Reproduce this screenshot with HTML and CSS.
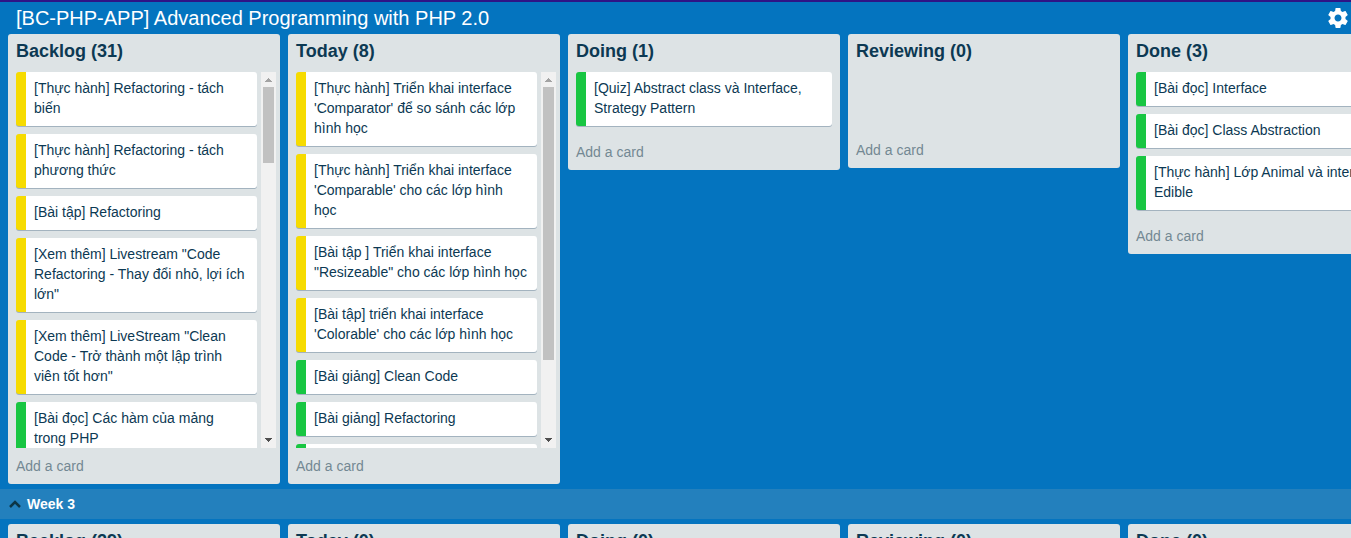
FILE: index.html
```html
<!DOCTYPE html>
<html lang="vi">
<head>
<meta charset="utf-8">
<title>[BC-PHP-APP] Advanced Programming with PHP 2.0</title>
<link rel="stylesheet" href="styles.css">
</head>
<body>
<header class="topbar">
  <h1 class="board-title">[BC-PHP-APP] Advanced Programming with PHP 2.0</h1>
  <svg class="gear" viewBox="2 2 20 20"><path fill="#fff" d="M19.43 12.98c.04-.32.07-.64.07-.98s-.03-.66-.07-.98l2.11-1.65c.19-.15.24-.42.12-.64l-2-3.46c-.12-.22-.39-.3-.61-.22l-2.49 1c-.52-.4-1.08-.73-1.69-.98l-.38-2.65C14.460 2.180 14.250 2 14 2h-4c-.25 0-.46.18-.49.42l-.38 2.65c-.61.25-1.170.59-1.690.98l-2.490-1c-.23-.09-.49 0-.61.22l-2 3.460c-.13.22-.07.49.12.64l2.110 1.650c-.04.32-.07.65-.07.98s.03.66.07.98l-2.110 1.650c-.19.15-.24.42-.12.64l2 3.460c.12.22.39.3.61.22l2.490-1c.52.4 1.080.73 1.690.98l.38 2.650c.03.24.24.42.49.42h4c.25 0 .46-.18.49-.42l.38-2.650c.61-.25 1.170-.59 1.690-.98l2.490 1c.23.09.49 0 .61-.22l2-3.460c.12-.22.07-.49-.12-.64l-2.110-1.650zM12 15.500c-1.930 0-3.500-1.570-3.500-3.500s1.570-3.500 3.500-3.500 3.500 1.570 3.500 3.500-1.570 3.500-3.500 3.500z"/></svg>
</header>
<main class="lists">
  <section class="column">
    <h2>Backlog (31)</h2>
    <div class="scroll-area">
      <div class="cards">
        <div class="card yellow">[Thực hành] Refactoring - tách<br>biến</div>
        <div class="card yellow">[Thực hành] Refactoring - tách<br>phương thức</div>
        <div class="card yellow">[Bài tập] Refactoring</div>
        <div class="card yellow">[Xem thêm] Livestream "Code<br>Refactoring - Thay đổi nhỏ, lợi ích<br>lớn"</div>
        <div class="card yellow">[Xem thêm] LiveStream "Clean<br>Code - Trở thành một lập trình<br>viên tốt hơn"</div>
        <div class="card green">[Bài đọc] Các hàm của mảng<br>trong PHP</div>
      </div>
      <div class="scrollbar">
        <svg class="arrow" viewBox="0 0 15 15"><path fill="#a3a3a3" d="M4 10h7v-1h-1v-1h-1v-1h-1v-1h-1v1h-1v1h-1v1h-1z"/></svg>
        <div class="thumb"></div>
        <svg class="arrow" viewBox="0 0 15 15"><path fill="#505050" d="M4 5h7v1h-1v1h-1v1h-1v1h-1v-1h-1v-1h-1v-1h-1z"/></svg>
      </div>
    </div>
    <div class="add">Add a card</div>
  </section>
  <section class="column">
    <h2>Today (8)</h2>
    <div class="scroll-area">
      <div class="cards">
        <div class="card yellow">[Thực hành] Triển khai interface<br>'Comparator' để so sánh các lớp<br>hình học</div>
        <div class="card yellow">[Thực hành] Triển khai interface<br>'Comparable' cho các lớp hình<br>học</div>
        <div class="card yellow">[Bài tập ] Triển khai interface<br>"Resizeable" cho các lớp hình học</div>
        <div class="card yellow">[Bài tập] triển khai interface<br>'Colorable' cho các lớp hình học</div>
        <div class="card green">[Bài giảng] Clean Code</div>
        <div class="card green">[Bài giảng] Refactoring</div>
        <div class="card green"></div>
      </div>
      <div class="scrollbar">
        <svg class="arrow" viewBox="0 0 15 15"><path fill="#a3a3a3" d="M4 10h7v-1h-1v-1h-1v-1h-1v-1h-1v1h-1v1h-1v1h-1z"/></svg>
        <div class="thumb tall"></div>
        <svg class="arrow" viewBox="0 0 15 15"><path fill="#505050" d="M4 5h7v1h-1v1h-1v1h-1v1h-1v-1h-1v-1h-1v-1h-1z"/></svg>
      </div>
    </div>
    <div class="add">Add a card</div>
  </section>
  <section class="column">
    <h2>Doing (1)</h2>
    <div class="cards open">
      <div class="card green">[Quiz] Abstract class và Interface,<br>Strategy Pattern</div>
    </div>
    <div class="add">Add a card</div>
  </section>
  <section class="column">
    <h2>Reviewing (0)</h2>
    <div class="cards open"></div>
    <div class="add">Add a card</div>
  </section>
  <section class="column">
    <h2>Done (3)</h2>
    <div class="cards open">
      <div class="card green">[Bài đọc] Interface</div>
      <div class="card green">[Bài đọc] Class Abstraction</div>
      <div class="card green">[Thực hành] Lớp Animal và interface<br>Edible</div>
    </div>
    <div class="add">Add a card</div>
  </section>
</main>
<div class="swimlane">
  <svg class="chevron" viewBox="0 0 12 8"><path d="M1 7l5-5 5 5" fill="none" stroke="#0c3547" stroke-width="2.5"/></svg>
  <span>Week 3</span>
</div>
<div class="lists next">
  <section class="column"><h2>Backlog (29)</h2></section>
  <section class="column"><h2>Today (0)</h2></section>
  <section class="column"><h2>Doing (0)</h2></section>
  <section class="column"><h2>Reviewing (0)</h2></section>
  <section class="column"><h2>Done (0)</h2></section>
</div>
</body>
</html>
```

FILE: styles.css
```css
* { box-sizing: border-box; }
body {
  margin: 0;
  height: 538px;
  overflow: hidden;
  background: #0474bf;
  color: #0c3953;
  font: 14px/20px "Liberation Sans", Arial, sans-serif;
}
.topbar {
  height: 34px;
  border-top: 2px solid #2e1486;
  padding: 0 3px 0 16px;
  display: flex;
  align-items: center;
  justify-content: space-between;
}
.board-title { margin: 0; font-size: 20px; line-height: 32px; font-weight: 400; color: #fff; }
.gear { width: 20px; height: 20px; }
.lists {
  display: flex;
  align-items: flex-start;
  gap: 8px;
  height: 455px;
  padding-left: 8px;
}
.column {
  flex: 0 0 272px;
  background: #dde3e5;
  border-radius: 3px;
  padding: 0 8px;
}
.column h2 { margin: 0; height: 38px; font-size: 18px; line-height: 34px; font-weight: 700; }
.scroll-area { height: 376px; display: flex; gap: 4px; margin-right: -4px; overflow: hidden; }
.cards { flex: 1; min-width: 0; display: flex; flex-direction: column; gap: 8px; }
.cards.open { min-height: 60px; padding-bottom: 8px; }
.card {
  flex: none;
  min-height: 34px;
  padding: 6px 0 8px 8px;
  border-left: 10px solid;
  border-radius: 3px;
  background: #fff;
  box-shadow: 0 1px 0 #a3b3bf;
  white-space: nowrap;
}
.card.yellow { border-left-color: #f6db00; }
.card.green { border-left-color: #18c642; }
.scrollbar { width: 15px; background: #f1f1f1; display: flex; flex-direction: column; align-items: center; }
.arrow { width: 15px; height: 15px; flex: none; shape-rendering: crispEdges; }
.thumb { width: 11px; height: 76px; background: #c1c1c1; margin-bottom: auto; }
.thumb.tall { height: 273px; }
.add { height: 36px; line-height: 36px; color: #738893; }
.swimlane {
  height: 30px;
  background: #2380bd;
  display: flex;
  align-items: center;
  gap: 6px;
  padding-left: 9px;
  color: #fff;
  font-weight: 700;
}
.chevron { width: 12px; height: 8px; }
.next { padding-top: 5px; height: 19px; overflow: hidden; }
```
